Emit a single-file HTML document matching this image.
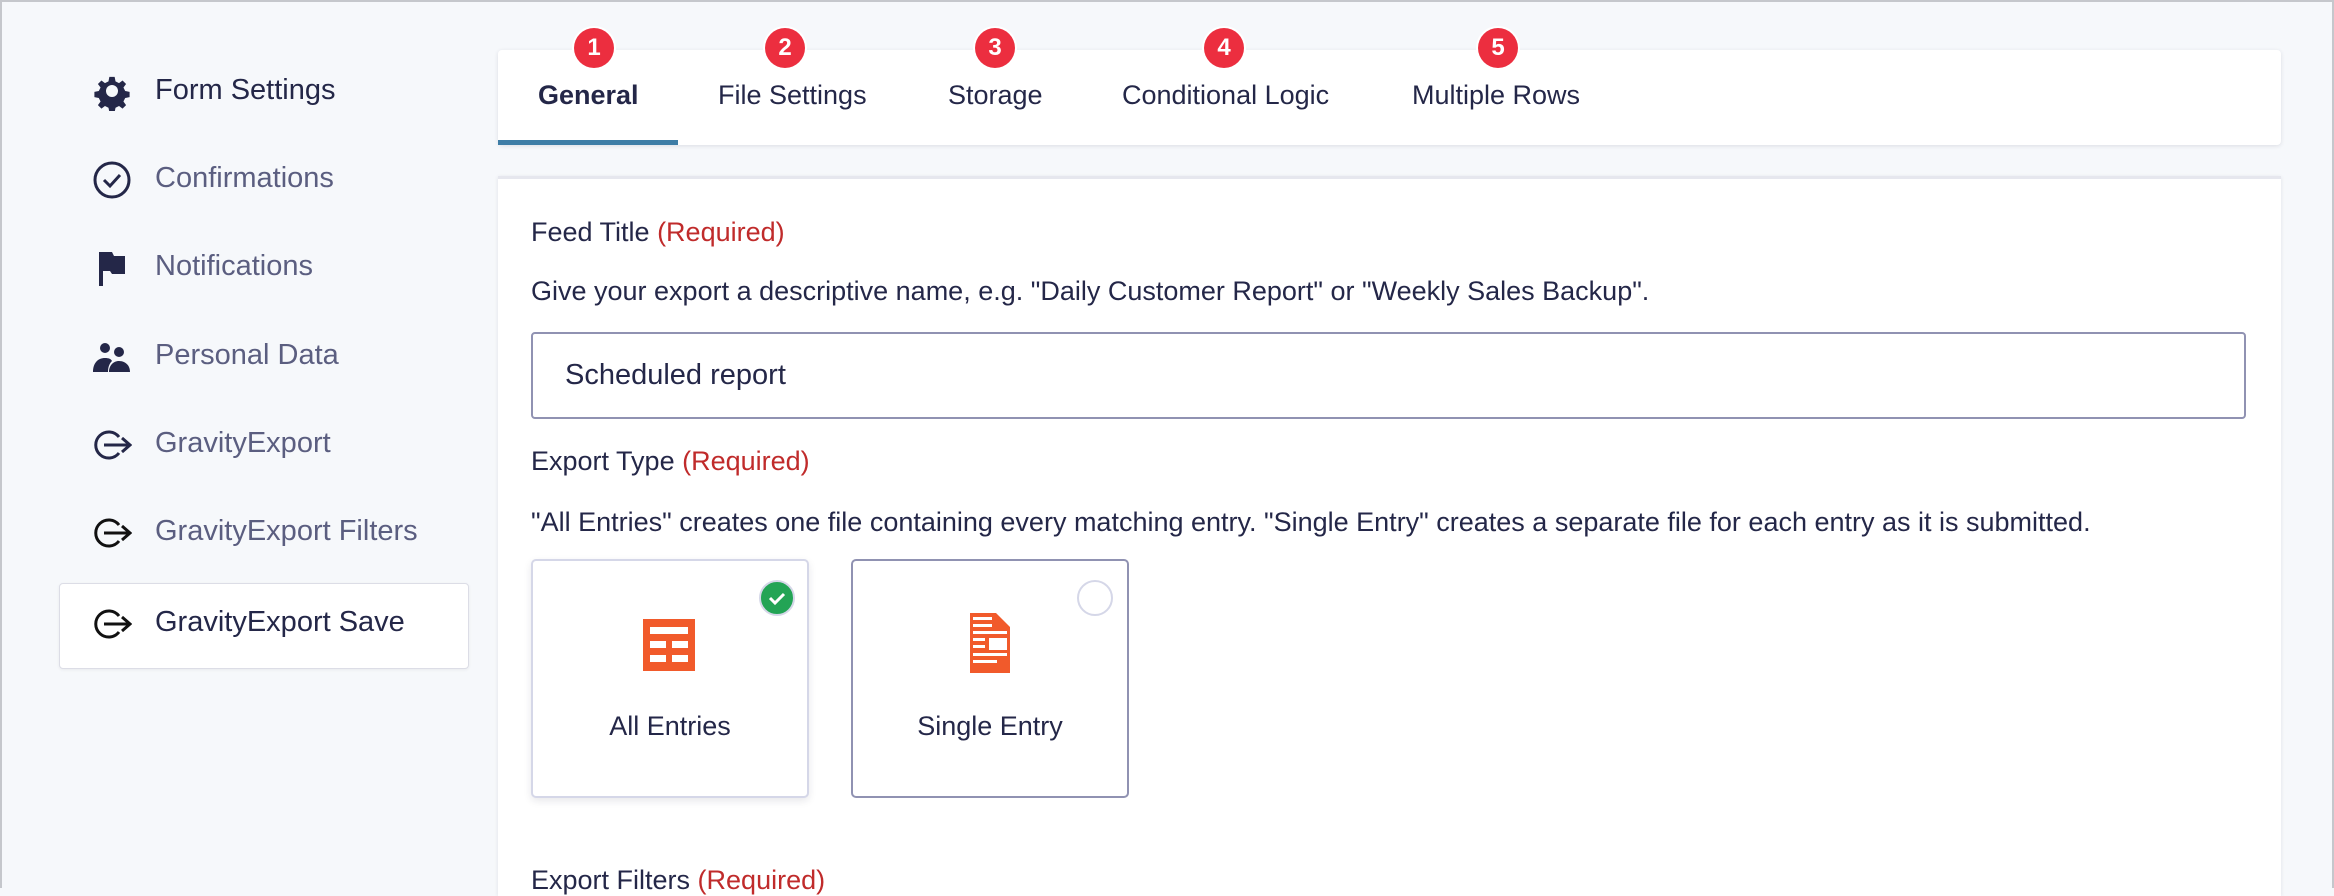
<!DOCTYPE html>
<html><head><meta charset="utf-8"><style>
*{box-sizing:border-box;margin:0;padding:0}
body{width:2334px;height:888px;overflow:hidden;background:#f6f8fb;font-family:"Liberation Sans",sans-serif;position:relative;border:2px solid #c5c7cc;border-bottom:none}
.abs{position:absolute}
.nav{position:absolute;left:153px;font-size:29px;color:#5b5e80;line-height:32px}
.ic{position:absolute;left:90px;width:40px;height:40px}
.act{position:absolute;left:57px;top:581px;width:410px;height:86px;background:#fff;border:1px solid #dcdde6;border-radius:4px;box-shadow:0 1px 3px rgba(0,0,0,.06)}
.tabs{position:absolute;left:496px;top:48px;width:1783px;height:95px;background:#fff;border-radius:4px;box-shadow:0 1px 4px rgba(30,30,60,.12)}
.tab{position:absolute;top:29px;font-size:27px;color:#242748;line-height:32px}
.badge{position:absolute;top:26px;width:40px;height:40px;border-radius:50%;background:#ec2e3f;color:#fff;font-weight:bold;font-size:24px;text-align:center;line-height:40px;box-shadow:0 0 0 2px #fff}
.card{position:absolute;left:496px;top:174px;width:1783px;height:720px;background:#fff;border-top:3px solid #e6e7ee;box-shadow:0 1px 4px rgba(30,30,60,.1)}
.lbl{position:absolute;left:33px;font-size:27px;color:#242748;line-height:30px}
.req{color:#c02b2b}
.opt{position:absolute;top:380px;width:278px;height:239px;background:#fff;border-radius:5px}
</style></head><body>
<!-- sidebar -->
<svg class="ic" style="top:69px" viewBox="0 0 40 40"><path fill="#242748" d="M17 4h6l1 5 4 2 4-3 4 4-3 4 2 4 5 1v6l-5 1-2 4 3 4-4 4-4-3-4 2-1 5h-6l-1-5-4-2-4 3-4-4 3-4-2-4-5-1v-6l5-1 2-4-3-4 4-4 4 3 4-2z" transform="translate(20 20) scale(.88) translate(-20 -20)"/><circle cx="20" cy="20" r="6" fill="#f6f8fb"/></svg>
<div class="nav" style="top:72px;color:#242748">Form Settings</div>
<svg class="ic" style="top:158px" viewBox="0 0 40 40"><circle cx="20" cy="20" r="17" fill="none" stroke="#242748" stroke-width="3"/><path d="M12 20l6 6 10-11" fill="none" stroke="#242748" stroke-width="3"/></svg>
<div class="nav" style="top:160px">Confirmations</div>
<svg class="ic" style="top:246px" viewBox="0 0 40 40"><path d="M7 4h4v34H7z M11 4h9l2 4h11v18H20l-2-3H11z" fill="#242748"/></svg>
<div class="nav" style="top:248px">Notifications</div>
<svg class="ic" style="top:336px" viewBox="0 0 40 40"><circle cx="13" cy="10" r="5" fill="#242748"/><circle cx="27" cy="14" r="5" fill="#242748"/><path d="M1 34c0-9 5-14 12-14 4 0 6 1 7 3-3 3-4 7-4 11z M17 34c0-6 4-11 10-11s11 4 11 11z" fill="#242748"/></svg>
<div class="nav" style="top:337px">Personal Data</div>
<div class="act"></div>
<svg class="ic" style="top:423px" viewBox="0 0 40 40"><path d="M27 12A13 13 0 1 0 27 28" fill="none" stroke="#242748" stroke-width="3"/><path d="M12 20h26M30 13l8 7-8 7" fill="none" stroke="#242748" stroke-width="3"/></svg>
<div class="nav" style="top:425px">GravityExport</div>
<svg class="ic" style="top:511px" viewBox="0 0 40 40"><path d="M27 12A13 13 0 1 0 27 28" fill="none" stroke="#111" stroke-width="3"/><path d="M12 20h26M30 13l8 7-8 7" fill="none" stroke="#111" stroke-width="3"/></svg>
<div class="nav" style="top:513px">GravityExport Filters</div>
<svg class="ic" style="top:602px" viewBox="0 0 40 40"><path d="M27 12A13 13 0 1 0 27 28" fill="none" stroke="#111" stroke-width="3"/><path d="M12 20h26M30 13l8 7-8 7" fill="none" stroke="#111" stroke-width="3"/></svg>
<div class="nav" style="top:604px;color:#242748">GravityExport Save</div>
<!-- tabs -->
<div class="tabs">
<div class="tab" style="left:40px;font-weight:bold">General</div>
<div class="tab" style="left:220px">File Settings</div>
<div class="tab" style="left:450px">Storage</div>
<div class="tab" style="left:624px">Conditional Logic</div>
<div class="tab" style="left:914px">Multiple Rows</div>
<div class="abs" style="left:0;top:90px;width:180px;height:5px;background:#3e7da6"></div>
</div>
<div class="badge" style="left:572px">1</div>
<div class="badge" style="left:763px">2</div>
<div class="badge" style="left:973px">3</div>
<div class="badge" style="left:1202px">4</div>
<div class="badge" style="left:1476px">5</div>
<!-- content -->
<div class="card">
<div class="lbl" style="top:38px">Feed Title <span class="req">(Required)</span></div>
<div class="lbl" style="top:97px">Give your export a descriptive name, e.g. "Daily Customer Report" or "Weekly Sales Backup".</div>
<div class="abs" style="left:33px;top:153px;width:1715px;height:87px;border:2px solid #9092b2;border-radius:4px;font-size:29px;color:#242748;padding-left:32px;line-height:83px">Scheduled report</div>
<div class="lbl" style="top:267px">Export Type <span class="req">(Required)</span></div>
<div class="lbl" style="top:328px">"All Entries" creates one file containing every matching entry. "Single Entry" creates a separate file for each entry as it is submitted.</div>
<div class="opt" style="left:33px;border:2px solid #d5d7e8;box-shadow:0 3px 8px rgba(30,30,60,.1)">
 <svg class="abs" style="left:110px;top:58px" width="52" height="52" viewBox="0 0 52 52"><rect width="52" height="52" fill="#f15a2b"/><rect x="7" y="8" width="38" height="7" fill="#fff"/><rect x="7" y="22" width="16" height="7" fill="#fff"/><rect x="29" y="22" width="16" height="7" fill="#fff"/><rect x="7" y="36" width="16" height="7" fill="#fff"/><rect x="29" y="36" width="16" height="7" fill="#fff"/></svg>
 <div class="abs" style="left:0;width:100%;text-align:center;top:150px;font-size:27px;color:#242748">All Entries</div>
 <svg class="abs" style="left:226px;top:19px" width="36" height="36" viewBox="0 0 36 36"><circle cx="18" cy="18" r="17" fill="#23a455" stroke="#d5d7e8" stroke-width="2"/><path d="M11 18l5 5 9-9" fill="none" stroke="#fff" stroke-width="3"/></svg>
</div>
<div class="opt" style="left:353px;border:2px solid #9092b2">
 <svg class="abs" style="left:117px;top:52px" width="40" height="60" viewBox="0 0 40 60"><path d="M0 0h26l14 14v46H0z" fill="#f15a2b"/><g fill="#fff"><rect x="3" y="4" width="19" height="3"/><rect x="3" y="11" width="19" height="3"/><rect x="3" y="18" width="34" height="3"/><rect x="3" y="25" width="12" height="3"/><rect x="19" y="25" width="18" height="12"/><rect x="3" y="32" width="12" height="3"/><rect x="3" y="40" width="34" height="3"/><rect x="3" y="47" width="24" height="3"/></g></svg>
 <div class="abs" style="left:0;width:100%;text-align:center;top:150px;font-size:27px;color:#242748">Single Entry</div>
 <div class="abs" style="left:224px;top:19px;width:36px;height:36px;border-radius:50%;border:2px solid #d5d7e8"></div>
</div>
<div class="lbl" style="top:686px">Export Filters <span class="req">(Required)</span></div>
</div>
</body></html>
